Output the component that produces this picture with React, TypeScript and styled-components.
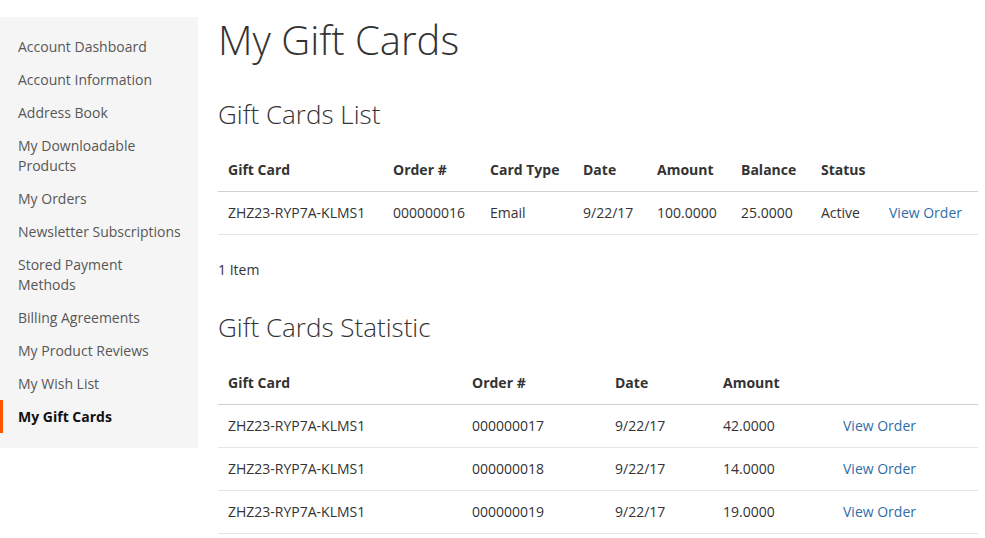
import React from 'react';
import styled, { createGlobalStyle } from 'styled-components';

const GlobalStyle = createGlobalStyle`
  body {
    margin: 0;
    background: #fff;
    font-family: 'Open Sans', 'Noto Sans', sans-serif;
    color: #333;
    font-size: 14px;
  }
`;

const Page = styled.div`
  display: flex;
  align-items: flex-start;
`;

const Sidebar = styled.nav`
  width: 198px;
  flex-shrink: 0;
  margin-top: 17px;
  background: #f5f5f5;
  padding: 13px 0 15px;
`;

const NavItem = styled.div<{ $active?: boolean }>`
  position: relative;
  padding: 6.5px 16px 6.5px 18px;
  line-height: 20px;
  font-size: 14px;
  color: ${(p) => (p.$active ? '#111' : '#575757')};
  font-weight: ${(p) => (p.$active ? 700 : 400)};
  ${(p) =>
    p.$active &&
    `
    &:before {
      content: '';
      position: absolute;
      left: 0;
      top: 0;
      bottom: 0;
      width: 3px;
      background: #ff5501;
    }
  `}
`;

const Main = styled.main`
  flex: 1;
  padding: 0 7px 0 20px;
`;

const PageTitle = styled.h1`
  margin: 18px 0 0;
  font-size: 40px;
  font-weight: 300;
  line-height: 44px;
  color: #333;
`;

const BlockTitle = styled.h2<{ $top: number }>`
  margin: ${(p) => p.$top}px 0 0;
  font-size: 26px;
  font-weight: 300;
  line-height: 32px;
  color: #333;
`;

const Table = styled.table`
  width: 760px;
  border-collapse: collapse;
  table-layout: fixed;
  margin-top: 19px;
`;

const Th = styled.th`
  text-align: left;
  font-weight: 700;
  padding: 11px 10px;
  line-height: 20px;
  border-bottom: 1px solid #d1d1d1;
  color: #333;
`;

const Td = styled.td`
  padding: 11px 10px;
  line-height: 20px;
  border-bottom: 1px solid #e5e5e5;
  color: #333;
  white-space: nowrap;
`;

const Link = styled.a`
  color: #2f6ea8;
  text-decoration: none;
`;

const Count = styled.div`
  margin-top: 25px;
  line-height: 20px;
`;

const navItems = [
  'Account Dashboard',
  'Account Information',
  'Address Book',
  'My Downloadable Products',
  'My Orders',
  'Newsletter Subscriptions',
  'Stored Payment Methods',
  'Billing Agreements',
  'My Product Reviews',
  'My Wish List',
  'My Gift Cards',
];

const listCols = [165, 97, 93, 74, 84, 80, 68, 99];
const listHead = ['Gift Card', 'Order #', 'Card Type', 'Date', 'Amount', 'Balance', 'Status', ''];

const statCols = [244, 143, 108, 120, 145];
const statHead = ['Gift Card', 'Order #', 'Date', 'Amount', ''];
const statRows = [
  ['ZHZ23-RYP7A-KLMS1', '000000017', '9/22/17', '42.0000'],
  ['ZHZ23-RYP7A-KLMS1', '000000018', '9/22/17', '14.0000'],
  ['ZHZ23-RYP7A-KLMS1', '000000019', '9/22/17', '19.0000'],
];

const App = () => {
  return (
    <Page>
      <GlobalStyle />
      <Sidebar>
        {navItems.map((item) => (
          <NavItem key={item} $active={item === 'My Gift Cards'}>
            {item}
          </NavItem>
        ))}
      </Sidebar>
      <Main>
        <PageTitle>My Gift Cards</PageTitle>
        <BlockTitle $top={36}>Gift Cards List</BlockTitle>
        <Table>
          <colgroup>
            {listCols.map((w, i) => (
              <col key={i} style={{ width: w }} />
            ))}
          </colgroup>
          <thead>
            <tr>
              {listHead.map((h, i) => (
                <Th key={i}>{h}</Th>
              ))}
            </tr>
          </thead>
          <tbody>
            <tr>
              <Td>ZHZ23-RYP7A-KLMS1</Td>
              <Td>000000016</Td>
              <Td>Email</Td>
              <Td>9/22/17</Td>
              <Td>100.0000</Td>
              <Td>25.0000</Td>
              <Td>Active</Td>
              <Td>
                <Link href="#">View Order</Link>
              </Td>
            </tr>
          </tbody>
        </Table>
        <Count>1 Item</Count>
        <BlockTitle $top={31}>Gift Cards Statistic</BlockTitle>
        <Table>
          <colgroup>
            {statCols.map((w, i) => (
              <col key={i} style={{ width: w }} />
            ))}
          </colgroup>
          <thead>
            <tr>
              {statHead.map((h, i) => (
                <Th key={i}>{h}</Th>
              ))}
            </tr>
          </thead>
          <tbody>
            {statRows.map((r) => (
              <tr key={r[1]}>
                {r.map((c, i) => (
                  <Td key={i}>{c}</Td>
                ))}
                <Td>
                  <Link href="#">View Order</Link>
                </Td>
              </tr>
            ))}
          </tbody>
        </Table>
      </Main>
    </Page>
  );
};

export default App;
